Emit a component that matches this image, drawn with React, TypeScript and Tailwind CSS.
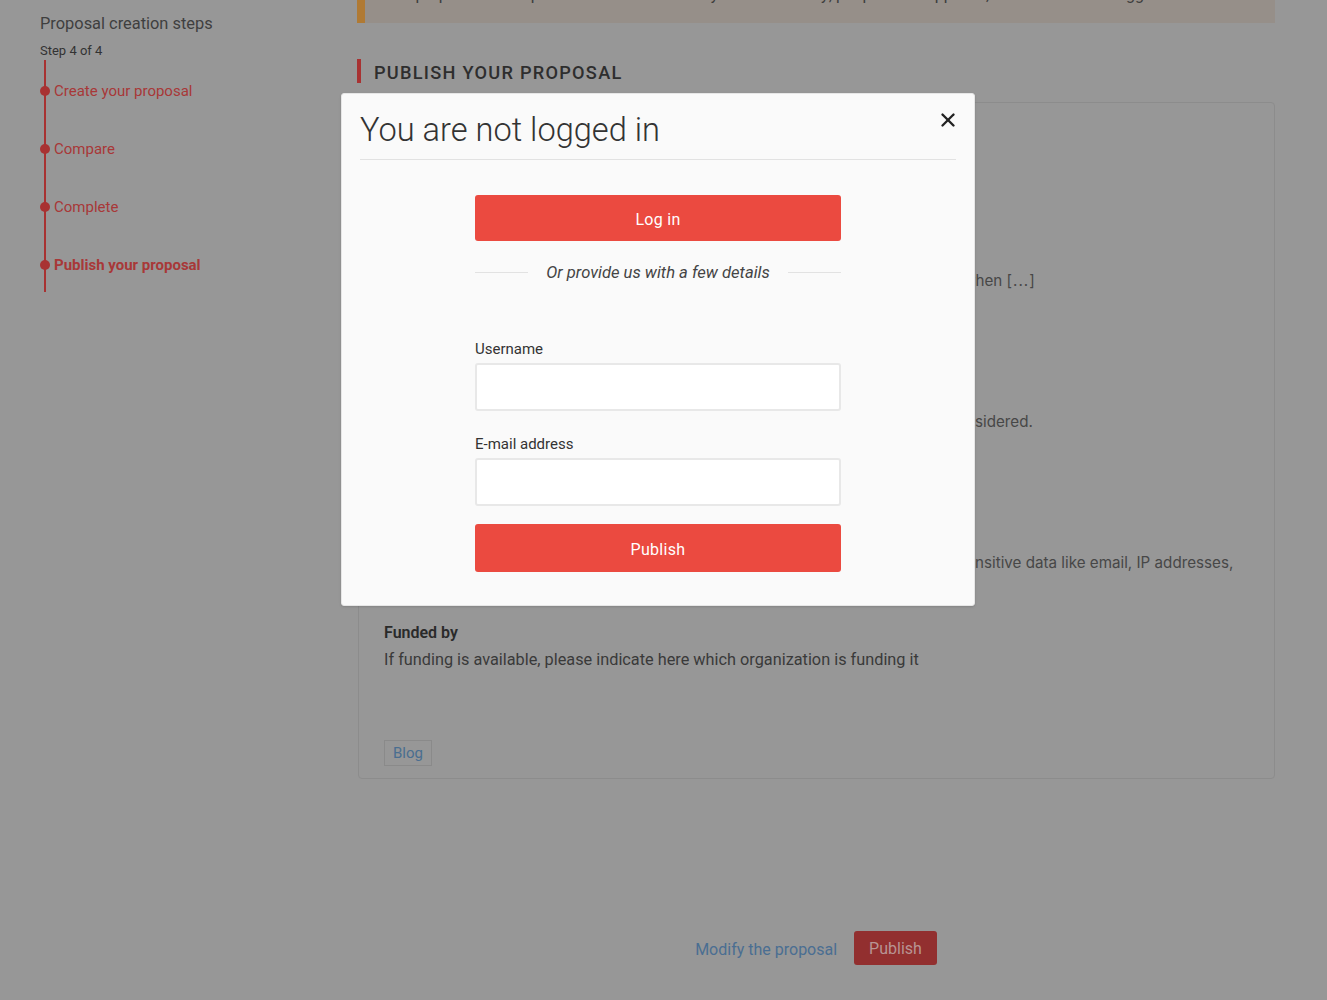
import { X } from 'lucide-react';

const steps = [
  { label: 'Create your proposal', active: false },
  { label: 'Compare', active: false },
  { label: 'Complete', active: false },
  { label: 'Publish your proposal', active: true },
];

// a line whose start is covered by the modal, only the tail shows
function TailLine({ hidden, width, tail }: { hidden: string; width: string; tail: React.ReactNode }) {
  return (
    <div className="whitespace-nowrap font-['Inter',sans-serif] text-[15.2px] leading-[27px] text-[#474747]">
      <span className={`inline-block overflow-hidden align-top ${width}`}>{hidden}</span>
      {tail}
    </div>
  );
}

function Field({ label, children }: { label: string; children: React.ReactNode }) {
  return (
    <div className="mb-[16.5px]">
      <div className="text-[16px] font-semibold leading-[27px] text-[#2a2a2a]">{label}</div>
      {children}
    </div>
  );
}

export default function App() {
  return (
    <div className="relative min-h-screen bg-[#979797] font-['Roboto',sans-serif]">
      <div className="flex">
        {/* Sidebar */}
        <aside className="w-[357px] shrink-0 pl-[40px] pt-[13px]">
          <h3 className="text-[16.4px] leading-[22px] text-[#3f3f3f]">Proposal creation steps</h3>
          <p className="mt-[7px] text-[13px] leading-[18px] text-[#333]">Step 4 of 4</p>
          <div className="ml-[4px] flex flex-col gap-[38px] border-l-2 border-[#a83232] pt-[21px] pb-[17px]">
            {steps.map((s) => (
              <div key={s.label} className="relative flex h-[20px] items-center pl-[8px]">
                <span className="absolute -left-[6px] top-[5px] h-[10px] w-[10px] rounded-full bg-[#a83232]" />
                <span className={`text-[15px] text-[#a83838] ${s.active ? 'font-bold' : ''}`}>{s.label}</span>
              </div>
            ))}
          </div>
        </aside>

        {/* Main column */}
        <main className="w-[918px]">
          <div className="h-[23px] overflow-hidden border-l-[8px] border-[#b07a34] bg-[#968f89] pl-[14px]">
            <p className="-mt-[17px] whitespace-nowrap text-[16px] leading-[24px] text-[#3d3d3d]">
              Your proposal will be published and reviewed by the community; people can support it, comment it and suggest ideas
            </p>
          </div>

          <div className="mt-[36px] flex h-[24px] items-center border-l-4 border-[#a83232] pl-[13px]">
            <h2 className="pt-[3px] text-[18.2px] font-medium uppercase leading-[24px] tracking-[1.25px] text-[#2e2e2e]">
              Publish your proposal
            </h2>
          </div>

          <div className="ml-[1px] mt-[19px] rounded-[4px] border border-[#8c8c8c] px-[25px] pt-[39px] pb-[12px]">
            <Field label="Title">
              <div className="text-[15px] leading-[27px] text-[#3a3a3a]">Open data for the neighbourhood</div>
            </Field>
            <Field label="Summary">
              <div className="text-[15px] leading-[27px] text-[#3a3a3a]">We want to collect and publish public data about the city</div>
              <TailLine
                width="w-[579px]"
                hidden="so that citizens can use it to build services, especially w"
                tail={
                  <>
                    when <span className="tracking-[1px]">[...]</span>
                  </>
                }
              />
            </Field>
            <Field label="Category">
              <div className="text-[15px] leading-[27px] text-[#3a3a3a]">Participation</div>
            </Field>
            <Field label="Requirements">
              <TailLine
                width="w-[591px]"
                hidden="All the requirements listed in the call have been carefully con"
                tail="sidered."
              />
            </Field>
            <Field label="Scope">
              <div className="text-[15px] leading-[27px] text-[#3a3a3a]">District</div>
            </Field>
            <Field label="Privacy">
              <TailLine
                width="w-[591px]"
                hidden="The project will not store or publish any personal or se"
                tail="nsitive data like email, IP addresses,"
              />
              <div className="font-['Inter',sans-serif] text-[15.2px] leading-[27px] text-[#474747]">phone numbers.</div>
            </Field>
            <div>
              <div className="text-[16px] font-semibold leading-[27px] text-[#2a2a2a]">Funded by</div>
              <div className="text-[16.3px] leading-[27px] text-[#3a3a3a]">
                If funding is available, please indicate here which organization is funding it
              </div>
            </div>
            <div className="mt-[67px] flex">
              <span className="flex h-[26px] items-center border border-[#8a8a8a] px-[8px] text-[15px] text-[#4a6e90]">
                Blog
              </span>
            </div>
          </div>

          <div className="mt-[152px] flex items-center justify-center gap-[17px] pb-[35px]">
            <a className="pt-[3px] text-[16px] text-[#4a6e92]">Modify the proposal</a>
            <button className="h-[34px] rounded-[3px] bg-[#922f2f] px-[15px] pt-[2px] text-[16px] text-[#b89494]">
              Publish
            </button>
          </div>
        </main>
      </div>

      {/* Modal */}
      <div className="absolute left-[341px] top-[93px] w-[634px] rounded-[3px] border border-[#e6e6e6] bg-[#fafafa] shadow-sm">
        <button className="absolute right-[15px] top-[15px] text-[#222]">
          <X size={22} strokeWidth={2.6} />
        </button>
        <div className="mx-[18px] border-b border-[#e2e2e2] pt-[17px] pb-[10px]">
          <h1 className="text-[32.6px] font-light leading-[38px] text-[#333]">You are not logged in</h1>
        </div>
        <div className="mx-auto w-[366px] pt-[35px] pb-[33px]">
          <button className="h-[46px] w-full rounded-[3px] bg-[#eb4a40] pt-[3px] text-[16px] tracking-[0.3px] text-white">
            Log in
          </button>
          <div className="mt-[20px] flex h-[22px] items-center gap-[18px]">
            <span className="h-px flex-1 bg-[#e2e2e2]" />
            <span className="pt-[2px] text-[16.6px] italic text-[#444]">Or provide us with a few details</span>
            <span className="h-px flex-1 bg-[#e2e2e2]" />
          </div>
          <label className="mt-[56px] block text-[15px] leading-[20px] text-[#333]">Username</label>
          <input className="mt-[4px] block h-[48px] w-full rounded-[3px] border-2 border-[#e8e8e8] bg-white px-3 outline-none" />
          <label className="mt-[23px] block text-[15px] leading-[20px] text-[#333]">E-mail address</label>
          <input className="mt-[4px] block h-[48px] w-full rounded-[3px] border-2 border-[#e8e8e8] bg-white px-3 outline-none" />
          <button className="mt-[18px] h-[48px] w-full rounded-[3px] bg-[#eb4a40] pt-[3px] text-[16px] tracking-[0.3px] text-white">
            Publish
          </button>
        </div>
      </div>
    </div>
  );
}
